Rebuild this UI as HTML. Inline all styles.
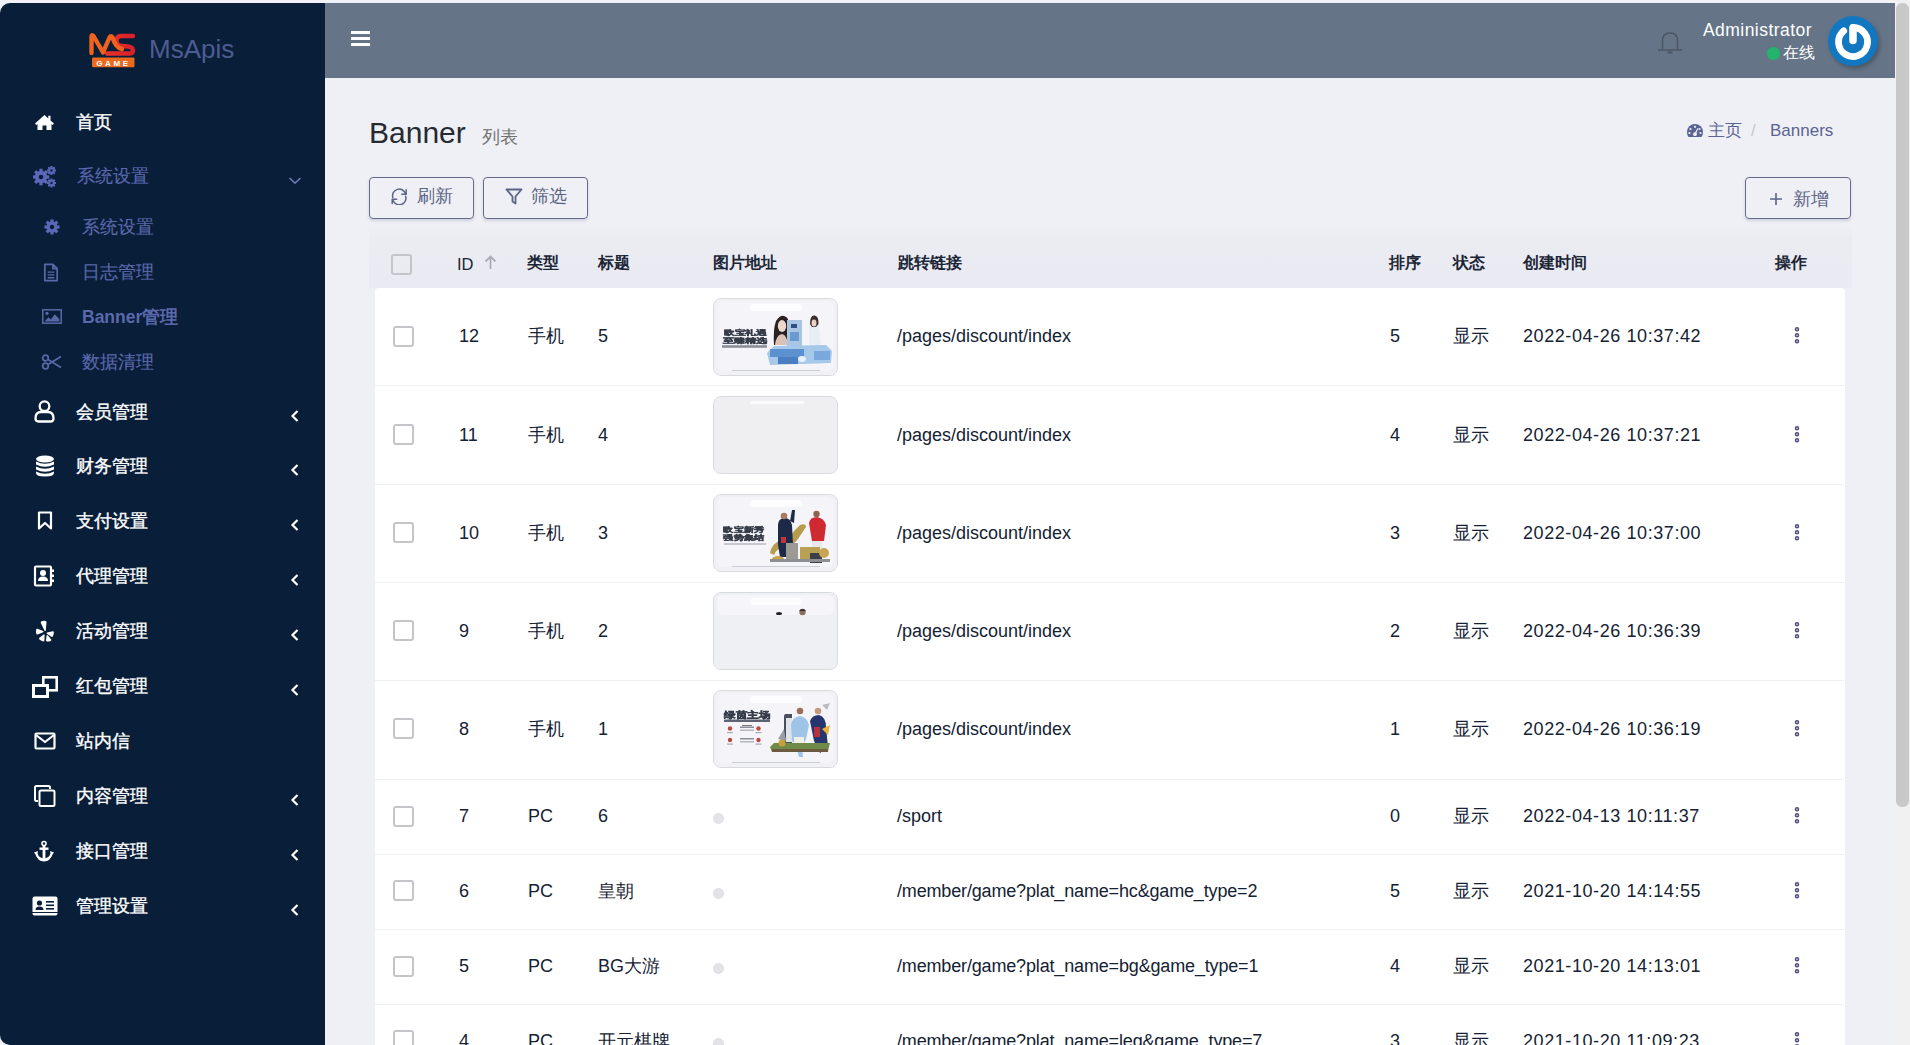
<!DOCTYPE html>
<html><head><meta charset="utf-8">
<style>
*{box-sizing:border-box;margin:0;padding:0}
html,body{width:1910px;height:1045px;overflow:hidden;background:#f1f2f7;font-family:"Liberation Sans",sans-serif}
#side{position:absolute;left:0;top:3px;width:325px;height:1042px;background:#091e38;border-radius:10px 0 0 10px;overflow:hidden}
#hdr{position:absolute;left:325px;top:3px;width:1570px;height:75px;background:#657587}
#main{position:absolute;left:325px;top:78px;width:1570px;height:967px;background:#eff0f5;overflow:hidden}
#sb{position:absolute;left:1895px;top:0;width:15px;height:1045px;background:#f1f1f1}
#thumb{position:absolute;left:1896px;top:3px;width:13px;height:804px;background:#c8c8c8;border-radius:6px}
.abs{position:absolute;white-space:nowrap}
.mi{position:absolute;left:0;width:325px;height:40px;color:#fff;font-size:18px}
.mi .ic{position:absolute}
.mi .tx{position:absolute;left:76px;top:9px;line-height:22px}
.mi .chev{position:absolute}
.mt{color:#fff;font-size:18px;line-height:22px;-webkit-text-stroke:0.35px currentColor}
.sub{color:#5a68ac;font-size:17.5px;-webkit-text-stroke:0.15px currentColor}
.btn{border:1.5px solid #646b88;border-radius:4px;box-shadow:0 2px 3px rgba(60,70,120,0.18)}
.cb{width:21px;height:21px;border:2px solid #c3c5c9;border-radius:3px;background:#fff}
.th{font-size:16px;font-weight:bold;color:#1b2536;line-height:22px}
.td{font-size:18px;color:#142233;line-height:22px}
.thumb{width:125px;height:78px;border:1px solid #d9dadf;border-radius:8px;overflow:hidden;line-height:0;background:#f0f0f4}
</style></head><body>
<div id="side">
 <svg class="abs" style="left:86px;top:23px" width="54" height="44" viewBox="0 0 54 44">
  <defs><linearGradient id="lg1" x1="0" x2="1"><stop offset="0" stop-color="#e8322a"/><stop offset="1" stop-color="#d9202b"/></linearGradient></defs>
  <path d="M47 10 H35 Q30.5 10 30.5 15 Q30.5 19.5 36 20 L42 20.5 Q47 21 47 25 Q47 27.5 42.5 27.5 H21" fill="none" stroke="url(#lg1)" stroke-width="4.4" stroke-linecap="round" stroke-linejoin="round"/>
  <path d="M5.5 27 V10.5 Q5.5 8 7.5 10 L17 26.5 L23.5 11.5 Q25 9 26.5 11.5 Q29.5 21.5 36 23" fill="none" stroke="#f0621e" stroke-width="4.4" stroke-linecap="round" stroke-linejoin="round"/>
  <rect x="6" y="31.5" width="42.5" height="9.8" rx="1.2" fill="#ec6a20"/>
  <text x="27.5" y="39.6" text-anchor="middle" font-family="Liberation Sans" font-weight="bold" font-size="8" letter-spacing="2.6" fill="#fff">GAME</text>
 </svg>
 <div class="abs" style="left:149px;top:31px;font-size:26px;color:#4d5c92;line-height:30px">MsApis</div>

 <svg class="abs" style="left:34px;top:111px" width="21" height="17" viewBox="0 0 21 17"><path d="M10.5 1 L1 9.5 L2.3 11 L3.5 10 L3.5 16 L8.5 16 L8.5 11.5 L12.5 11.5 L12.5 16 L17.5 16 L17.5 10 L18.7 11 L20 9.5 L16.5 6.4 L16.5 1.8 L14.3 1.8 L14.3 4.4 Z" fill="#fff"/></svg>
 <div class="abs mt" style="left:76px;top:108px">首页</div>

 <svg class="abs" style="left:33px;top:163px" width="24" height="22" viewBox="0 0 24 22">
   <g fill="#5c67b8">
    <circle cx="8" cy="11" r="6.2"/>
    <g transform="translate(8 11)"><rect x="-1.6" y="-8.3" width="3.2" height="16.6"/><rect x="-1.6" y="-8.3" width="3.2" height="16.6" transform="rotate(45)"/><rect x="-1.6" y="-8.3" width="3.2" height="16.6" transform="rotate(90)"/><rect x="-1.6" y="-8.3" width="3.2" height="16.6" transform="rotate(135)"/></g>
    <circle cx="18.5" cy="4.5" r="3.2"/>
    <g transform="translate(18.5 4.5)"><rect x="-1" y="-4.5" width="2" height="9"/><rect x="-1" y="-4.5" width="2" height="9" transform="rotate(45)"/><rect x="-1" y="-4.5" width="2" height="9" transform="rotate(90)"/><rect x="-1" y="-4.5" width="2" height="9" transform="rotate(135)"/></g>
    <circle cx="18.5" cy="17" r="3.2"/>
    <g transform="translate(18.5 17)"><rect x="-1" y="-4.5" width="2" height="9"/><rect x="-1" y="-4.5" width="2" height="9" transform="rotate(45)"/><rect x="-1" y="-4.5" width="2" height="9" transform="rotate(90)"/><rect x="-1" y="-4.5" width="2" height="9" transform="rotate(135)"/></g>
   </g>
   <g fill="#091e38"><circle cx="8" cy="11" r="2.3"/><circle cx="18.5" cy="4.5" r="1.2"/><circle cx="18.5" cy="17" r="1.2"/></g>
 </svg>
 <div class="abs mt" style="left:77px;top:162px;color:#5a68ae;-webkit-text-stroke:0.15px currentColor">系统设置</div>
 <svg class="abs" style="left:288px;top:172px" width="14" height="10" viewBox="0 0 14 10"><path d="M1.5 3 L7 8.2 L12.5 3" fill="none" stroke="#6a75b8" stroke-width="1.7"/></svg>

 <svg class="abs" style="left:44px;top:216px" width="16" height="16" viewBox="0 0 16 16"><g transform="translate(8 8)" fill="#5c67b8"><circle r="5.5"/><rect x="-1.6" y="-7.5" width="3.2" height="15"/><rect x="-1.6" y="-7.5" width="3.2" height="15" transform="rotate(45)"/><rect x="-1.6" y="-7.5" width="3.2" height="15" transform="rotate(90)"/><rect x="-1.6" y="-7.5" width="3.2" height="15" transform="rotate(135)"/><circle r="2.2" fill="#091e38"/></g></svg>
 <div class="abs mt sub" style="left:82px;top:213px">系统设置</div>
 <svg class="abs" style="left:43px;top:260px" width="16" height="20" viewBox="0 0 16 21"><path d="M1.5 1.5 H10 L14.5 6 V18.5 H1.5 Z M10 1.5 V6 H14.5" fill="none" stroke="#5a68a8" stroke-width="1.8" stroke-linejoin="round"/><path d="M4.5 9.5 H11.5 M4.5 12.5 H11.5 M4.5 15.5 H11.5" stroke="#5a68a8" stroke-width="1.4"/></svg>
 <div class="abs mt sub" style="left:82px;top:258px">日志管理</div>
 <svg class="abs" style="left:42px;top:306px" width="20" height="15" viewBox="0 0 20 15"><rect x="0.8" y="0.8" width="18.4" height="13.4" fill="none" stroke="#5a68a8" stroke-width="1.5"/><circle cx="5" cy="4.3" r="1.6" fill="#5a68a8"/><path d="M2.5 12.5 L6.5 8.3 L8.8 10.4 L12.8 5.2 L17.3 10 V12.5 Z" fill="#5a68a8"/></svg>
 <div class="abs mt sub" style="left:82px;top:303px;font-weight:bold;-webkit-text-stroke:0">Banner管理</div>
 <svg class="abs" style="left:41px;top:351px" width="21" height="16" viewBox="0 0 21 16"><g fill="none" stroke="#5a68a8" stroke-width="1.7"><circle cx="4.5" cy="4" r="2.8"/><circle cx="4.5" cy="12" r="2.8"/><path d="M7 5.5 L20 13.5 M7 10.5 L20 2.5"/></g></svg>
 <div class="abs mt sub" style="left:82px;top:348px">数据清理</div>
<div class="abs" style="left:34px;top:397px;line-height:0"><svg width="21" height="23" viewBox="0 0 21 23"><g fill="none" stroke="#fff" stroke-width="2.3"><circle cx="10.5" cy="6.2" r="4.8"/><path d="M4.5 21.5 Q1.5 21.5 1.5 18.5 Q1.5 12 7 12 H14 Q19.5 12 19.5 18.5 Q19.5 21.5 16.5 21.5 Z" stroke-linejoin="round"/></g></svg></div><div class="abs mt" style="left:76px;top:398px">会员管理</div><svg class="abs" style="left:290px;top:405.5px" width="10" height="14" viewBox="0 0 10 14"><path d="M7.5 2 L2.5 7 L7.5 12" fill="none" stroke="#fff" stroke-width="2.2"/></svg><div class="abs" style="left:35px;top:452px;line-height:0"><svg width="20" height="22" viewBox="0 0 20 22"><g fill="#fff"><ellipse cx="10" cy="4" rx="9" ry="3.5"/><path d="M1 6.5 Q10 11 19 6.5 V9.5 Q10 14 1 9.5 Z"/><path d="M1 11.5 Q10 16 19 11.5 V14.5 Q10 19 1 14.5 Z"/><path d="M1 16.5 Q10 21 19 16.5 V18 Q19 21.5 10 21.5 Q1 21.5 1 18 Z"/></g></svg></div><div class="abs mt" style="left:76px;top:452px">财务管理</div><svg class="abs" style="left:290px;top:459.5px" width="10" height="14" viewBox="0 0 10 14"><path d="M7.5 2 L2.5 7 L7.5 12" fill="none" stroke="#fff" stroke-width="2.2"/></svg><div class="abs" style="left:37px;top:508px;line-height:0"><svg width="16" height="20" viewBox="0 0 16 20"><path d="M2 1.5 H14 V17.5 L8 12 L2 17.5 Z" fill="none" stroke="#fff" stroke-width="2.2" stroke-linejoin="round"/></svg></div><div class="abs mt" style="left:76px;top:507px">支付设置</div><svg class="abs" style="left:290px;top:514.5px" width="10" height="14" viewBox="0 0 10 14"><path d="M7.5 2 L2.5 7 L7.5 12" fill="none" stroke="#fff" stroke-width="2.2"/></svg><div class="abs" style="left:33px;top:562px;line-height:0"><svg width="22" height="22" viewBox="0 0 22 22"><g fill="none" stroke="#fff" stroke-width="2.2"><rect x="2" y="1.5" width="16" height="19" rx="1"/></g><g fill="#fff"><rect x="18" y="4.5" width="3" height="2.5"/><rect x="18" y="9.5" width="3" height="2.5"/><rect x="18" y="14.5" width="3" height="2.5"/><circle cx="10" cy="8" r="3"/><path d="M5 16 Q5 11.5 10 11.5 Q15 11.5 15 16 Z"/></g></svg></div><div class="abs mt" style="left:76px;top:562px">代理管理</div><svg class="abs" style="left:290px;top:569.5px" width="10" height="14" viewBox="0 0 10 14"><path d="M7.5 2 L2.5 7 L7.5 12" fill="none" stroke="#fff" stroke-width="2.2"/></svg><div class="abs" style="left:35px;top:617px;line-height:0"><svg width="20" height="22" viewBox="0 0 20 22"><g fill="#fff"><path d="M6.5 1.2 Q8.5 0.3 10.8 1 Q11.6 1.4 11.5 2.5 L10.8 10.5 Q10.5 11.5 9.6 10.8 L5.8 3 Q5.5 1.8 6.5 1.2 Z"/><path d="M1.2 9.5 Q1.4 8.5 2.4 8.8 L8.2 11 Q9 11.6 8.2 12.3 L2.6 14.5 Q1.5 14.7 1.2 13.6 Q0.9 11.5 1.2 9.5 Z"/><path d="M12 12.6 L17.8 11.2 Q18.8 11.2 18.9 12.2 Q18.9 14.5 17.8 16.5 Q17.2 17.3 16.4 16.7 L11.8 13.8 Q11.2 13.1 12 12.6 Z"/><path d="M8.6 14.4 Q9.5 14.2 9.6 15.2 L9.4 20.6 Q9.2 21.6 8.2 21.4 Q5.8 20.8 4.2 19.2 Q3.6 18.4 4.4 17.7 Z"/><path d="M11.6 15.4 Q12.2 14.7 13 15.4 L16.3 19.6 Q16.6 20.5 15.7 20.9 Q13.7 21.7 11.8 21.5 Q11 21.3 11 20.3 Z"/></g></svg></div><div class="abs mt" style="left:76px;top:617px">活动管理</div><svg class="abs" style="left:290px;top:624.5px" width="10" height="14" viewBox="0 0 10 14"><path d="M7.5 2 L2.5 7 L7.5 12" fill="none" stroke="#fff" stroke-width="2.2"/></svg><div class="abs" style="left:32px;top:673px;line-height:0"><svg width="26" height="22" viewBox="0 0 26 22"><g fill="none" stroke="#fff"><rect x="11.3" y="1.3" width="13.4" height="13" stroke-width="2.6"/><rect x="1.5" y="9.5" width="14" height="11" stroke-width="3" fill="#091e38"/></g></svg></div><div class="abs mt" style="left:76px;top:672px">红包管理</div><svg class="abs" style="left:290px;top:679.5px" width="10" height="14" viewBox="0 0 10 14"><path d="M7.5 2 L2.5 7 L7.5 12" fill="none" stroke="#fff" stroke-width="2.2"/></svg><div class="abs" style="left:34px;top:729px;line-height:0"><svg width="22" height="18" viewBox="0 0 22 18"><g fill="none" stroke="#fff" stroke-width="2.2" stroke-linejoin="round"><rect x="1.5" y="1.5" width="19" height="15" rx="1"/><path d="M2 3 L11 10 L20 3"/></g></svg></div><div class="abs mt" style="left:76px;top:727px">站内信</div><div class="abs" style="left:33px;top:781px;line-height:0"><svg width="24" height="24" viewBox="0 0 24 24"><g fill="none" stroke="#fff" stroke-width="2"><path d="M5 17 H3.5 Q2 17 2 15.5 V3.5 Q2 2 3.5 2 H15.5 Q17 2 17 3.5 V5"/><rect x="6.5" y="6.5" width="15" height="15.5" rx="1.5"/></g></svg></div><div class="abs mt" style="left:76px;top:782px">内容管理</div><svg class="abs" style="left:290px;top:789.5px" width="10" height="14" viewBox="0 0 10 14"><path d="M7.5 2 L2.5 7 L7.5 12" fill="none" stroke="#fff" stroke-width="2.2"/></svg><div class="abs" style="left:33px;top:837px;line-height:0"><svg width="22" height="22" viewBox="0 0 22 22"><g fill="#fff"><circle cx="11" cy="3.5" r="2.8"/><rect x="9.6" y="5" width="2.8" height="15"/><rect x="6.5" y="7.5" width="9" height="2.4"/><path d="M1 12.5 L5 11 L4.5 13.5 Q6 18 11 18.5 Q16 18 17.5 13.5 L17 11 L21 12.5 L19.5 14.5 Q17.5 21 11 21.5 Q4.5 21 2.5 14.5 Z"/></g><circle cx="11" cy="3.5" r="1.2" fill="#091e38"/></svg></div><div class="abs mt" style="left:76px;top:837px">接口管理</div><svg class="abs" style="left:290px;top:844.5px" width="10" height="14" viewBox="0 0 10 14"><path d="M7.5 2 L2.5 7 L7.5 12" fill="none" stroke="#fff" stroke-width="2.2"/></svg><div class="abs" style="left:32px;top:893px;line-height:0"><svg width="26" height="20" viewBox="0 0 26 20"><rect x="0.5" y="0.5" width="25" height="19" rx="2" fill="#fff"/><g fill="#091e38"><circle cx="7.5" cy="7" r="2.6"/><path d="M3.5 14 Q3.5 10.5 7.5 10.5 Q11.5 10.5 11.5 14 Z"/><rect x="14" y="5" width="8" height="1.6"/><rect x="14" y="8.5" width="8" height="1.6"/><rect x="14" y="12" width="8" height="1.6"/><rect x="0" y="16" width="26" height="1"/></g></svg></div><div class="abs mt" style="left:76px;top:892px">管理设置</div><svg class="abs" style="left:290px;top:899.5px" width="10" height="14" viewBox="0 0 10 14"><path d="M7.5 2 L2.5 7 L7.5 12" fill="none" stroke="#fff" stroke-width="2.2"/></svg></div>
<div id="hdr"><svg class="abs" style="left:26px;top:28px" width="19" height="15" viewBox="0 0 19 15"><g fill="#fff"><rect x="0" y="0" width="19" height="3"/><rect x="0" y="6" width="19" height="3"/><rect x="0" y="12" width="19" height="3"/></g></svg>
<svg class="abs" style="left:1332px;top:27px" width="26" height="26" viewBox="0 0 26 26"><g fill="none" stroke="#4b5563" stroke-width="1.5"><path d="M5.5 19 V10.5 Q5.5 3 13 3 Q20.5 3 20.5 10.5 V19" /><path d="M1 20 H25"/><path d="M10.5 22.5 H15.5" stroke-width="2"/></g></svg>
<div class="abs" style="left:1378px;top:16px;font-size:17.5px;letter-spacing:0.45px;color:#fff;line-height:22px">Administrator</div>
<div class="abs" style="left:1442px;top:44px;width:12.5px;height:12.5px;border-radius:50%;background:#22b46c"></div>
<div class="abs" style="left:1458px;top:40px;font-size:15.5px;color:#fff;line-height:20px">在线</div>
<div class="abs" style="left:1503px;top:13px;width:50px;height:50px;border-radius:50%;background:#1077c0;box-shadow:2px 3px 4px rgba(0,0,0,0.25)"></div>
<svg class="abs" style="left:1503px;top:13px" width="50" height="50" viewBox="0 0 50 50"><path d="M25 11.5 A14.5 14.5 0 1 1 15.7 14.9" fill="none" stroke="#fff" stroke-width="6.8" stroke-linecap="round"/><path d="M25 12 V24.5" stroke="#fff" stroke-width="7.5" stroke-linecap="round"/></svg>
</div>
<div id="main"></div>
<div class="abs" style="left:369px;top:116px;font-size:30px;color:#262b33;line-height:34px">Banner</div>
<div class="abs" style="left:482px;top:126px;font-size:18px;color:#707070;line-height:22px">列表</div>
<svg class="abs" style="left:1686px;top:123px" width="18" height="15" viewBox="0 0 18 15"><path d="M9 1 A8 8 0 0 0 1 9 Q1 12 2.5 14 H15.5 Q17 12 17 9 A8 8 0 0 0 9 1 Z" fill="#5a6392"/><g fill="#eff0f5"><circle cx="9" cy="3.8" r="1.1"/><circle cx="4.5" cy="6" r="1.1"/><circle cx="13.5" cy="6" r="1.1"/><circle cx="3.5" cy="10" r="1.1"/><circle cx="14.5" cy="10" r="1.1"/><circle cx="9" cy="11.2" r="1.9"/><path d="M8.3 11 L11.5 5 L12.3 5.4 L9.8 11.6 Z"/></g></svg>
<div class="abs" style="left:1708px;top:120px;font-size:17px;color:#5a6392;line-height:22px">主页</div>
<div class="abs" style="left:1751px;top:120px;font-size:17px;color:#c4c7cf;line-height:22px">/</div>
<div class="abs" style="left:1770px;top:120px;font-size:17px;color:#5a6392;line-height:22px">Banners</div>
<div class="abs btn" style="left:369px;top:177px;width:105px;height:42px"></div>
<svg class="abs" style="left:390px;top:188px" width="19" height="17" viewBox="0 0 19 17"><g fill="none" stroke="#5c6486" stroke-width="1.5" stroke-linecap="round" stroke-linejoin="round"><path d="M2.8 9.5 A6.3 6.3 0 0 1 15.6 6"/><path d="M16.2 1.8 V6.3 H11.8"/><path d="M15.6 8.2 A6.3 6.3 0 0 1 3 12.2"/><path d="M2.2 15.6 V11.3 H6.6"/></g></svg>
<div class="abs" style="left:417px;top:185px;font-size:17.5px;color:#5c6486;line-height:22px">刷新</div>
<div class="abs btn" style="left:483px;top:177px;width:105px;height:42px"></div>
<svg class="abs" style="left:505px;top:188px" width="18" height="17" viewBox="0 0 18 17"><path d="M1.5 1.5 H16.5 L10.5 8.5 V15.5 L7.5 13.5 V8.5 Z" fill="none" stroke="#5c6486" stroke-width="1.8" stroke-linejoin="round"/></svg>
<div class="abs" style="left:531px;top:185px;font-size:17.5px;color:#5c6486;line-height:22px">筛选</div>
<div class="abs btn" style="left:1745px;top:177px;width:106px;height:42px"></div>
<svg class="abs" style="left:1769px;top:192px" width="14" height="14" viewBox="0 0 14 14"><path d="M7 1 V13 M1 7 H13" stroke="#5c6486" stroke-width="1.6"/></svg>
<div class="abs" style="left:1793px;top:188px;font-size:17.5px;color:#5c6486;line-height:22px">新增</div>
<div class="abs" style="left:369px;top:224px;width:1483px;height:64px;background:linear-gradient(#eff0f5 0px,#ebebf2 16px,#eaebf2 100%);border-radius:4px 4px 0 0"></div>
<div class="abs cb" style="left:391px;top:254px;background:transparent"></div>
<div class="abs th" style="left:457px;top:253px;font-weight:normal;font-size:16.5px">ID</div>
<svg class="abs" style="left:484px;top:255px" width="13" height="15" viewBox="0 0 13 15"><path d="M6.5 1.5 V14 M1.5 6.5 L6.5 1.5 L11.5 6.5" fill="none" stroke="#a9aeb6" stroke-width="1.8"/></svg>
<div class="abs th" style="left:527px;top:252px">类型</div>
<div class="abs th" style="left:598px;top:252px">标题</div>
<div class="abs th" style="left:713px;top:252px">图片地址</div>
<div class="abs th" style="left:898px;top:252px">跳转链接</div>
<div class="abs th" style="left:1389px;top:252px">排序</div>
<div class="abs th" style="left:1453px;top:252px">状态</div>
<div class="abs th" style="left:1523px;top:252px">创建时间</div>
<div class="abs th" style="left:1775px;top:252px">操作</div>
<div class="abs" style="left:375px;top:288px;width:1470px;height:800px;background:#fff;border-radius:4px 4px 0 0"></div>
<div class="abs" style="left:375px;top:385px;width:1469px;height:1px;background:#eff0f4"></div>
<div class="abs" style="left:375px;top:484px;width:1469px;height:1px;background:#eff0f4"></div>
<div class="abs" style="left:375px;top:582px;width:1469px;height:1px;background:#eff0f4"></div>
<div class="abs" style="left:375px;top:680px;width:1469px;height:1px;background:#eff0f4"></div>
<div class="abs" style="left:375px;top:779px;width:1469px;height:1px;background:#eff0f4"></div>
<div class="abs" style="left:375px;top:854px;width:1469px;height:1px;background:#eff0f4"></div>
<div class="abs" style="left:375px;top:929px;width:1469px;height:1px;background:#eff0f4"></div>
<div class="abs" style="left:375px;top:1004px;width:1469px;height:1px;background:#eff0f4"></div>
<div class="abs cb" style="left:393px;top:326px"></div>
<div class="abs td" style="left:459px;top:325px">12</div>
<div class="abs td" style="left:528px;top:325px">手机</div>
<div class="abs td" style="left:598px;top:325px">5</div>
<div class="abs thumb" style="left:713px;top:298px"><svg width="123" height="76" viewBox="0 0 123 76"><defs><filter id="bl" x="-5%" y="-5%" width="110%" height="110%"><feGaussianBlur stdDeviation="0.5"/></filter></defs><rect width="123" height="76" fill="#f1f1f5"/><rect x="3" y="2" width="117" height="70" rx="7" fill="#f5f5f9"/><rect x="36" y="5" width="52" height="7" rx="3.5" fill="#fdfdff"/><rect x="18" y="71" width="88" height="1" fill="#c9ccd4"/><g filter="url(#bl)"><g font-family="Liberation Sans" font-weight="bold" fill="#353a47" stroke="#353a47" stroke-width="0.4" font-size="7.2"><text x="10" y="35.6" textLength="43" lengthAdjust="spacingAndGlyphs">欧宝礼遇</text><text x="8.5" y="43.6" textLength="44.5" lengthAdjust="spacingAndGlyphs">至臻精选</text></g><rect x="8" y="46.2" width="45" height="2.6" fill="#8a8f9a"/><path d="M60 46 Q59 30 62 22 Q66 16 70 17 Q75 18 75 26 L74 46 Z" fill="#2c2220"/><ellipse cx="68" cy="27" rx="4.2" ry="6" fill="#ecd8cc"/><path d="M61 46 Q62 36 68 35 Q73 36 74 46 Z" fill="#d9c2b6"/><rect x="73" y="21" width="15" height="26" fill="#a8c6e4"/><rect x="77" y="25" width="6" height="4" fill="#2d4f86"/><rect x="76" y="33" width="9" height="9" fill="#6a9ad0"/><path d="M95 26 Q95 17 100 17 Q105 18 105 26 L107 46 L104 65 L97 65 L95 46 Z" fill="#e9eef5"/><path d="M96 25 Q96 16 100.5 16.5 Q105 17 104.5 25 L102 28 L98 28 Z" fill="#3a2f2d"/><ellipse cx="100" cy="24" rx="2.5" ry="3.5" fill="#e8d2c4"/><path d="M53 54 L60 47 L112 46 L118 52 L117 64 L56 66 Z" fill="#a6c8ea"/><rect x="56" y="50" width="34" height="8" fill="#5b91cf"/><rect x="64" y="58" width="20" height="7" fill="#4a7fc0"/><rect x="100" y="52" width="16" height="9" fill="#78a8dc"/><ellipse cx="88" cy="60" rx="4" ry="3" fill="#e8f0f8"/></g></svg></div>
<div class="abs td" style="left:897px;top:325px">/pages/discount/index</div>
<div class="abs td" style="left:1390px;top:325px">5</div>
<div class="abs td" style="left:1453px;top:325px">显示</div>
<div class="abs td" style="left:1523px;top:325px;letter-spacing:0.58px">2022-04-26 10:37:42</div>
<svg class="abs" style="left:1794px;top:327px" width="6" height="18" viewBox="0 0 6 18"><g fill="none" stroke="#4d5280" stroke-width="1.6"><circle cx="3" cy="2.3" r="1.5"/><circle cx="3" cy="8.3" r="1.5"/><circle cx="3" cy="14.3" r="1.5"/></g></svg>
<div class="abs cb" style="left:393px;top:424px"></div>
<div class="abs td" style="left:459px;top:423.5px">11</div>
<div class="abs td" style="left:528px;top:423.5px">手机</div>
<div class="abs td" style="left:598px;top:423.5px">4</div>
<div class="abs thumb" style="left:713px;top:396px"><svg width="123" height="76" viewBox="0 0 123 76"><rect width="123" height="76" fill="#efeff2"/><rect x="36" y="4" width="54" height="3" rx="1.5" fill="#fafafc"/></svg></div>
<div class="abs td" style="left:897px;top:423.5px">/pages/discount/index</div>
<div class="abs td" style="left:1390px;top:423.5px">4</div>
<div class="abs td" style="left:1453px;top:423.5px">显示</div>
<div class="abs td" style="left:1523px;top:423.5px;letter-spacing:0.58px">2022-04-26 10:37:21</div>
<svg class="abs" style="left:1794px;top:426px" width="6" height="18" viewBox="0 0 6 18"><g fill="none" stroke="#4d5280" stroke-width="1.6"><circle cx="3" cy="2.3" r="1.5"/><circle cx="3" cy="8.3" r="1.5"/><circle cx="3" cy="14.3" r="1.5"/></g></svg>
<div class="abs cb" style="left:393px;top:522px"></div>
<div class="abs td" style="left:459px;top:521.5px">10</div>
<div class="abs td" style="left:528px;top:521.5px">手机</div>
<div class="abs td" style="left:598px;top:521.5px">3</div>
<div class="abs thumb" style="left:713px;top:494px"><svg width="123" height="76" viewBox="0 0 123 76"><defs><filter id="bl" x="-5%" y="-5%" width="110%" height="110%"><feGaussianBlur stdDeviation="0.5"/></filter></defs><rect width="123" height="76" fill="#f1f1f5"/><rect x="3" y="2" width="117" height="70" rx="7" fill="#f5f5f9"/><rect x="36" y="5" width="52" height="7" rx="3.5" fill="#fdfdff"/><rect x="18" y="71" width="88" height="1" fill="#c9ccd4"/><g filter="url(#bl)"><g font-family="Liberation Sans" font-weight="bold" fill="#353a47" stroke="#353a47" stroke-width="0.4" font-size="7.2"><text x="9.5" y="37.2" textLength="40.5" lengthAdjust="spacingAndGlyphs">欧宝新秀</text><text x="9.5" y="45.2" textLength="40.5" lengthAdjust="spacingAndGlyphs">强势集结</text></g><rect x="10" y="48.5" width="42" height="1" fill="#9a9ea8"/><path d="M56 58 Q58 48 66 46 Q76 44 80 36 L86 30 Q92 28 92 32 L84 44 Q80 50 70 52 Q62 54 60 60 Z" fill="#b89c4e"/><path d="M64 30 Q64 24 70 23 Q76 22 78 30 L79 50 L76 62 L66 62 L64 50 Z" fill="#1f2a46"/><circle cx="70" cy="21" r="3.3" fill="#a77c64"/><path d="M76 26 L78 15 L81 15 L80 28 Z" fill="#1f2a46"/><rect x="67" y="42" width="5" height="6" fill="#c6303a"/><path d="M95 28 Q96 22 103 22 Q110 23 112 30 L110 46 L98 46 Z" fill="#cf2a30"/><circle cx="102.5" cy="19" r="3.2" fill="#8d6450"/><rect x="98" y="46" width="10" height="8" fill="#e8e8ea"/><rect x="72" y="48" width="12" height="16" fill="#9b9a94"/><rect x="86" y="52" width="20" height="12" fill="#b9a053"/><rect x="96" y="58" width="12" height="10" fill="#3b3f48"/><circle cx="110" cy="58" r="5" fill="#c9a552"/><ellipse cx="64" cy="64" rx="6" ry="3" fill="#c7a24a"/><rect x="56" y="64" width="60" height="3" fill="#8d8f94"/></g></svg></div>
<div class="abs td" style="left:897px;top:521.5px">/pages/discount/index</div>
<div class="abs td" style="left:1390px;top:521.5px">3</div>
<div class="abs td" style="left:1453px;top:521.5px">显示</div>
<div class="abs td" style="left:1523px;top:521.5px;letter-spacing:0.58px">2022-04-26 10:37:00</div>
<svg class="abs" style="left:1794px;top:524px" width="6" height="18" viewBox="0 0 6 18"><g fill="none" stroke="#4d5280" stroke-width="1.6"><circle cx="3" cy="2.3" r="1.5"/><circle cx="3" cy="8.3" r="1.5"/><circle cx="3" cy="14.3" r="1.5"/></g></svg>
<div class="abs cb" style="left:393px;top:620px"></div>
<div class="abs td" style="left:459px;top:619.5px">9</div>
<div class="abs td" style="left:528px;top:619.5px">手机</div>
<div class="abs td" style="left:598px;top:619.5px">2</div>
<div class="abs thumb" style="left:713px;top:592px"><svg width="123" height="76" viewBox="0 0 123 76"><rect width="123" height="76" fill="#eff0f4"/><rect x="3" y="2" width="117" height="20" rx="6" fill="#f5f5fa"/><rect x="36" y="5" width="52" height="7" rx="3.5" fill="#fcfcfe"/><ellipse cx="65" cy="20.5" rx="3" ry="1.6" fill="#222"/><circle cx="88.5" cy="19" r="3.2" fill="#8a6f5d"/><path d="M85 18 Q88.5 14 92 18 Z" fill="#3a2d2a"/></svg></div>
<div class="abs td" style="left:897px;top:619.5px">/pages/discount/index</div>
<div class="abs td" style="left:1390px;top:619.5px">2</div>
<div class="abs td" style="left:1453px;top:619.5px">显示</div>
<div class="abs td" style="left:1523px;top:619.5px;letter-spacing:0.58px">2022-04-26 10:36:39</div>
<svg class="abs" style="left:1794px;top:622px" width="6" height="18" viewBox="0 0 6 18"><g fill="none" stroke="#4d5280" stroke-width="1.6"><circle cx="3" cy="2.3" r="1.5"/><circle cx="3" cy="8.3" r="1.5"/><circle cx="3" cy="14.3" r="1.5"/></g></svg>
<div class="abs cb" style="left:393px;top:718px"></div>
<div class="abs td" style="left:459px;top:718px">8</div>
<div class="abs td" style="left:528px;top:718px">手机</div>
<div class="abs td" style="left:598px;top:718px">1</div>
<div class="abs thumb" style="left:713px;top:690px"><svg width="123" height="76" viewBox="0 0 123 76"><defs><filter id="bl" x="-5%" y="-5%" width="110%" height="110%"><feGaussianBlur stdDeviation="0.5"/></filter></defs><rect width="123" height="76" fill="#f1f1f5"/><rect x="3" y="2" width="117" height="70" rx="7" fill="#f5f5f9"/><rect x="36" y="5" width="52" height="7" rx="3.5" fill="#fdfdff"/><rect x="18" y="71" width="88" height="1" fill="#c9ccd4"/><g filter="url(#bl)"><g font-family="Liberation Sans" font-weight="bold" fill="#343b48" stroke="#343b48" stroke-width="0.5" font-size="9"><text x="10" y="27" textLength="46" lengthAdjust="spacingAndGlyphs">绿茵主场</text></g><rect x="10" y="28.5" width="46" height="2.5" fill="#5d6472"/><rect x="28" y="34" width="10" height="1" fill="#777"/><circle cx="16" cy="37.5" r="2.2" fill="#b84a45"/><rect x="13" y="41.0" width="6" height="1.2" fill="#aaa"/><rect x="26" y="35.5" width="14" height="1.5" fill="#8b8f98"/><rect x="26" y="38.5" width="14" height="1.5" fill="#b5b8c0"/><circle cx="44.5" cy="37.5" r="2.2" fill="#c0463e"/><rect x="41.5" y="41.0" width="6" height="1.2" fill="#aaa"/><circle cx="16" cy="49" r="2.2" fill="#b84a45"/><rect x="13" y="52.5" width="6" height="1.2" fill="#aaa"/><rect x="26" y="47" width="14" height="1.5" fill="#8b8f98"/><rect x="26" y="50" width="14" height="1.5" fill="#b5b8c0"/><circle cx="44.5" cy="49" r="2.2" fill="#c0463e"/><rect x="41.5" y="52.5" width="6" height="1.2" fill="#aaa"/><path d="M70 25 Q70 23 72 23 H78 V54 H72 Q70 54 70 52 Z" fill="#4a505c"/><rect x="72" y="27" width="6" height="24" fill="#dfe4ea"/><path d="M64 48 L70 38 L72 50 Z" fill="#9a9ea6"/><path d="M77 34 Q78 26 86 25 Q93 26 95 34 L92 48 L88 56 L89 66 L85 66 L82 54 L78 50 Z" fill="#9ec5e8"/><circle cx="86" cy="20" r="3.3" fill="#9b7058"/><rect x="80" y="46" width="10" height="7" fill="#f2efe8"/><path d="M96 30 Q98 24 105 24 Q112 26 112 36 L114 56 L106 62 L100 50 Z" fill="#28356e"/><rect x="100" y="36" width="6" height="10" fill="#b3323a"/><circle cx="104" cy="20" r="3.3" fill="#c49a7e"/><path d="M108 38 L116 34 L114 44 Z" fill="#e9b33a"/><path d="M56 56 L60 52 L116 52 L114 60 L58 61 Z" fill="#6f8a4a"/><rect x="58" y="58" width="56" height="3" fill="#6d5a40"/><circle cx="68" cy="52" r="3.5" fill="#c7a040"/><path d="M108 14 L116 12 L113 19 Z" fill="#b8bcc4"/></g></svg></div>
<div class="abs td" style="left:897px;top:718px">/pages/discount/index</div>
<div class="abs td" style="left:1390px;top:718px">1</div>
<div class="abs td" style="left:1453px;top:718px">显示</div>
<div class="abs td" style="left:1523px;top:718px;letter-spacing:0.58px">2022-04-26 10:36:19</div>
<svg class="abs" style="left:1794px;top:720px" width="6" height="18" viewBox="0 0 6 18"><g fill="none" stroke="#4d5280" stroke-width="1.6"><circle cx="3" cy="2.3" r="1.5"/><circle cx="3" cy="8.3" r="1.5"/><circle cx="3" cy="14.3" r="1.5"/></g></svg>
<div class="abs cb" style="left:393px;top:806px"></div>
<div class="abs td" style="left:459px;top:805px">7</div>
<div class="abs td" style="left:528px;top:805px">PC</div>
<div class="abs td" style="left:598px;top:805px">6</div>
<div class="abs" style="left:713px;top:813px;width:11px;height:11px;border-radius:50%;background:#e4e4e8;border:1px solid #dedee3"></div>
<div class="abs td" style="left:897px;top:805px">/sport</div>
<div class="abs td" style="left:1390px;top:805px">0</div>
<div class="abs td" style="left:1453px;top:805px">显示</div>
<div class="abs td" style="left:1523px;top:805px;letter-spacing:0.58px">2022-04-13 10:11:37</div>
<svg class="abs" style="left:1794px;top:807px" width="6" height="18" viewBox="0 0 6 18"><g fill="none" stroke="#4d5280" stroke-width="1.6"><circle cx="3" cy="2.3" r="1.5"/><circle cx="3" cy="8.3" r="1.5"/><circle cx="3" cy="14.3" r="1.5"/></g></svg>
<div class="abs cb" style="left:393px;top:880px"></div>
<div class="abs td" style="left:459px;top:880px">6</div>
<div class="abs td" style="left:528px;top:880px">PC</div>
<div class="abs td" style="left:598px;top:880px">皇朝</div>
<div class="abs" style="left:713px;top:888px;width:11px;height:11px;border-radius:50%;background:#e4e4e8;border:1px solid #dedee3"></div>
<div class="abs td" style="left:897px;top:880px;letter-spacing:-0.16px">/member/game?plat_name=hc&amp;game_type=2</div>
<div class="abs td" style="left:1390px;top:880px">5</div>
<div class="abs td" style="left:1453px;top:880px">显示</div>
<div class="abs td" style="left:1523px;top:880px;letter-spacing:0.58px">2021-10-20 14:14:55</div>
<svg class="abs" style="left:1794px;top:882px" width="6" height="18" viewBox="0 0 6 18"><g fill="none" stroke="#4d5280" stroke-width="1.6"><circle cx="3" cy="2.3" r="1.5"/><circle cx="3" cy="8.3" r="1.5"/><circle cx="3" cy="14.3" r="1.5"/></g></svg>
<div class="abs cb" style="left:393px;top:956px"></div>
<div class="abs td" style="left:459px;top:955px">5</div>
<div class="abs td" style="left:528px;top:955px">PC</div>
<div class="abs td" style="left:598px;top:955px">BG大游</div>
<div class="abs" style="left:713px;top:963px;width:11px;height:11px;border-radius:50%;background:#e4e4e8;border:1px solid #dedee3"></div>
<div class="abs td" style="left:897px;top:955px;letter-spacing:-0.16px">/member/game?plat_name=bg&amp;game_type=1</div>
<div class="abs td" style="left:1390px;top:955px">4</div>
<div class="abs td" style="left:1453px;top:955px">显示</div>
<div class="abs td" style="left:1523px;top:955px;letter-spacing:0.58px">2021-10-20 14:13:01</div>
<svg class="abs" style="left:1794px;top:957px" width="6" height="18" viewBox="0 0 6 18"><g fill="none" stroke="#4d5280" stroke-width="1.6"><circle cx="3" cy="2.3" r="1.5"/><circle cx="3" cy="8.3" r="1.5"/><circle cx="3" cy="14.3" r="1.5"/></g></svg>
<div class="abs cb" style="left:393px;top:1030px"></div>
<div class="abs td" style="left:459px;top:1030px">4</div>
<div class="abs td" style="left:528px;top:1030px">PC</div>
<div class="abs td" style="left:598px;top:1030px">开元棋牌</div>
<div class="abs" style="left:713px;top:1038px;width:11px;height:11px;border-radius:50%;background:#e4e4e8;border:1px solid #dedee3"></div>
<div class="abs td" style="left:897px;top:1030px;letter-spacing:-0.16px">/member/game?plat_name=leg&amp;game_type=7</div>
<div class="abs td" style="left:1390px;top:1030px">3</div>
<div class="abs td" style="left:1453px;top:1030px">显示</div>
<div class="abs td" style="left:1523px;top:1030px;letter-spacing:0.58px">2021-10-20 11:09:23</div>
<svg class="abs" style="left:1794px;top:1032px" width="6" height="18" viewBox="0 0 6 18"><g fill="none" stroke="#4d5280" stroke-width="1.6"><circle cx="3" cy="2.3" r="1.5"/><circle cx="3" cy="8.3" r="1.5"/><circle cx="3" cy="14.3" r="1.5"/></g></svg>
<div id="sb"></div><div id="thumb"></div>
</body></html>
